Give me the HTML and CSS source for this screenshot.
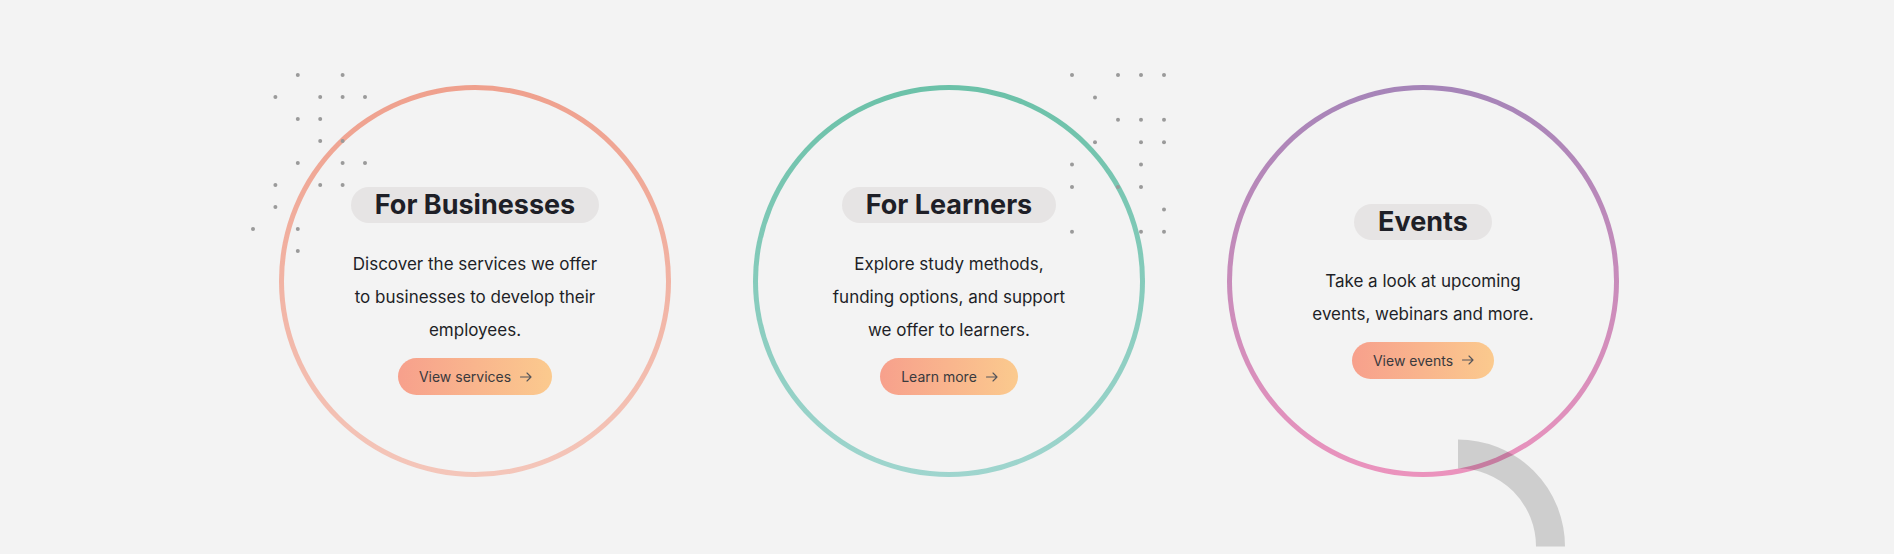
FILE: index.html
```html
<!DOCTYPE html>
<html lang="en">
<head>
<meta charset="utf-8">
<title>Audiences</title>
<link rel="stylesheet" href="styles.css">
</head>
<body>
<section class="audiences">
  <div class="cards">
    <div class="cell">
      <div class="ring ring-business">
        <div class="content">
          <h2 class="pill">For Businesses</h2>
          <p class="desc">Discover the services we offer<br>to businesses to develop their<br>employees.</p>
          <a class="btn" href="#">View services
            <svg class="arrow" viewBox="0 0 12 10" width="12" height="10"><path d="M0.5 5H11M7 1l4 4-4 4" fill="none" stroke="currentColor" stroke-width="1.1" stroke-linecap="round" stroke-linejoin="round"/></svg>
          </a>
        </div>
      </div>
      <svg class="dots dots-one" width="120" height="184" viewBox="0 0 120 184">
        <g fill="#9a9a9a">
          <circle cx="46.8" cy="2" r="2"/><circle cx="91.6" cy="2" r="2"/>
          <circle cx="24.4" cy="24" r="2"/><circle cx="69.2" cy="24" r="2"/><circle cx="91.6" cy="24" r="2"/><circle cx="114" cy="24" r="2"/>
          <circle cx="46.8" cy="46" r="2"/><circle cx="69.2" cy="46" r="2"/>
          <circle cx="69.2" cy="68" r="2"/><circle cx="91.6" cy="68" r="2"/>
          <circle cx="46.8" cy="90" r="2"/><circle cx="91.6" cy="90" r="2"/><circle cx="114" cy="90" r="2"/>
          <circle cx="24.4" cy="112" r="2"/><circle cx="69.2" cy="112" r="2"/><circle cx="91.6" cy="112" r="2"/>
          <circle cx="24.4" cy="134" r="2"/>
          <circle cx="2" cy="156" r="2"/><circle cx="46.8" cy="156" r="2"/>
          <circle cx="46.8" cy="178" r="2"/>
        </g>
      </svg>
    </div>
    <div class="cell">
      <div class="ring ring-learner">
        <div class="content">
          <h2 class="pill">For Learners</h2>
          <p class="desc">Explore study methods,<br>funding options, and support<br>we offer to learners.</p>
          <a class="btn" href="#">Learn more
            <svg class="arrow" viewBox="0 0 12 10" width="12" height="10"><path d="M0.5 5H11M7 1l4 4-4 4" fill="none" stroke="currentColor" stroke-width="1.1" stroke-linecap="round" stroke-linejoin="round"/></svg>
          </a>
        </div>
      </div>
      <svg class="dots dots-two" width="100" height="164" viewBox="0 0 100 164">
        <g fill="#9a9a9a">
          <circle cx="2" cy="2" r="2"/><circle cx="48" cy="2" r="2"/><circle cx="71" cy="2" r="2"/><circle cx="94" cy="2" r="2"/>
          <circle cx="25" cy="24.4" r="2"/>
          <circle cx="48" cy="46.8" r="2"/><circle cx="71" cy="46.8" r="2"/><circle cx="94" cy="46.8" r="2"/>
          <circle cx="25" cy="69.2" r="2"/><circle cx="71" cy="69.2" r="2"/><circle cx="94" cy="69.2" r="2"/>
          <circle cx="2" cy="91.6" r="2"/><circle cx="71" cy="91.6" r="2"/>
          <circle cx="2" cy="114" r="2"/><circle cx="48" cy="114" r="2"/><circle cx="71" cy="114" r="2"/>
          <circle cx="94" cy="136.4" r="2"/>
          <circle cx="2" cy="158.8" r="2"/><circle cx="71" cy="158.8" r="2"/><circle cx="94" cy="158.8" r="2"/>
        </g>
      </svg>
    </div>
    <div class="cell">
      <div class="ring ring-events">
        <div class="content">
          <h2 class="pill">Events</h2>
          <p class="desc">Take a look at upcoming<br>events, webinars and more.</p>
          <a class="btn" href="#">View events
            <svg class="arrow" viewBox="0 0 12 10" width="12" height="10"><path d="M0.5 5H11M7 1l4 4-4 4" fill="none" stroke="currentColor" stroke-width="1.1" stroke-linecap="round" stroke-linejoin="round"/></svg>
          </a>
        </div>
      </div>
      <svg class="arc" width="110" height="110" viewBox="0 0 110 110">
        <path d="M0 16A92.5 92.5 0 0 1 92.5 108.5" fill="none" stroke="rgba(0,0,0,0.15)" stroke-width="29"/>
      </svg>
    </div>
  </div>
</section>
</body>
</html>
```
FILE: styles.css
```css
* { box-sizing: border-box; }

html, body {
  margin: 0;
  padding: 0;
  background: #f3f3f3;
}

body {
  font-family: "Inter", "Liberation Sans", sans-serif;
  color: #1e1f27;
}

.audiences {
  height: 554px;
  overflow: hidden;
  padding: 85px 0 0 4px;
}

.cards {
  display: grid;
  grid-template-columns: repeat(3, 474px);
  justify-content: center;
}

.cell {
  position: relative;
  height: 392px;
  display: flex;
  justify-content: center;
}

.ring {
  width: 392px;
  height: 392px;
  border-radius: 50%;
  border: 5px solid transparent;
  display: flex;
  align-items: center;
  justify-content: center;
  padding-top: 20px;
}

.ring-business {
  background: linear-gradient(#f3f3f3, #f3f3f3) padding-box,
              linear-gradient(to bottom, #efa08d, #f4c6ba) border-box;
}

.ring-learner {
  background: linear-gradient(#f3f3f3, #f3f3f3) padding-box,
              linear-gradient(to bottom, #6bc1a8, #9fd5ce) border-box;
}

.ring-events {
  background: linear-gradient(#f3f3f3, #f3f3f3) padding-box,
              linear-gradient(to bottom, #a584b8, #eb93bd) border-box;
}

.content {
  display: flex;
  flex-direction: column;
  align-items: center;
  text-align: center;
}

.pill {
  margin: 0;
  background: #e6e4e4;
  border-radius: 20px;
  height: 36px;
  padding: 0 24px;
  font-size: 27px;
  font-weight: 700;
  line-height: 36px;
  color: #1e1f27;
}

.desc {
  margin: 25px 0 11px;
  font-size: 17px;
  line-height: 33px;
  color: #1e1f27;
}

.btn {
  display: inline-flex;
  align-items: center;
  gap: 9px;
  height: 37px;
  padding: 0 20px 0 21px;
  border-radius: 19px;
  background: linear-gradient(to right, #f7a08c, #fbca8e);
  color: #3a3a3e;
  font-size: 14px;
  text-decoration: none;
}

.arrow {
  display: block;
  color: #55555a;
}

.dots {
  position: absolute;
  display: block;
}

.dots-one {
  left: 13px;
  top: -12px;
}

.dots-two {
  left: 358px;
  top: -12px;
}

.arc {
  position: absolute;
  left: 272px;
  top: 353px;
  display: block;
}
```
